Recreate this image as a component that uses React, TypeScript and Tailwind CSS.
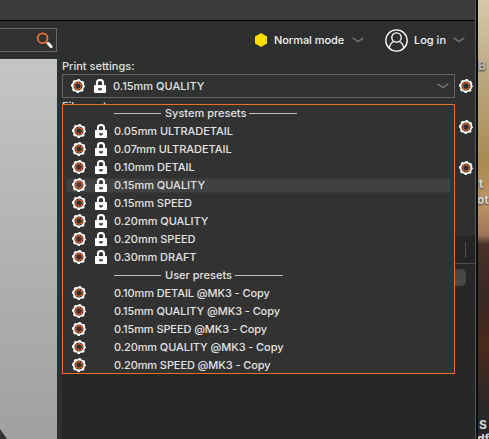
import React from 'react';

const systemPresets = [
  { name: '0.05mm ULTRADETAIL' },
  { name: '0.07mm ULTRADETAIL' },
  { name: '0.10mm DETAIL' },
  { name: '0.15mm QUALITY', selected: true },
  { name: '0.15mm SPEED' },
  { name: '0.20mm QUALITY' },
  { name: '0.20mm SPEED' },
  { name: '0.30mm DRAFT' },
];

const userPresets = [
  '0.10mm DETAIL @MK3 - Copy',
  '0.15mm QUALITY @MK3 - Copy',
  '0.15mm SPEED @MK3 - Copy',
  '0.20mm QUALITY @MK3 - Copy',
  '0.20mm SPEED @MK3 - Copy',
];

function Gear() {
  return (
    <svg className="h-[14px] w-[14px] shrink-0" viewBox="0 0 14 14" fill="none">
      <circle cx="7" cy="7" r="5.4" stroke="#fff" strokeWidth="1.7" />
      <circle cx="7" cy="7" r="6.2" stroke="#fff" strokeWidth="1.6" strokeDasharray="2.5 2.37" strokeDashoffset="1.25" />
      <circle cx="7" cy="7" r="3.2" stroke="#d0602a" strokeWidth="1" />
      <circle cx="7" cy="7" r="3.8" stroke="#f56c1e" strokeWidth="1.1" strokeDasharray="1.5 1.485" strokeDashoffset=".75" />
    </svg>
  );
}

function Lock() {
  return (
    <svg className="h-[14px] w-[12px] shrink-0" viewBox="0 0 12 14" fill="none">
      <path d="M2.9 7V4a3.1 3.1 0 0 1 6.2 0V7" stroke="#fff" strokeWidth="2" />
      <rect y="6" width="12" height="8" rx=".8" fill="#fff" />
      <path d="M4 9.3H8V10.7H6.6V11.8H5.4V10.7H4Z" fill="#333" />
    </svg>
  );
}

function Chevron() {
  return (
    <svg className="h-[6px] w-[12px] shrink-0" viewBox="0 0 12 6" fill="none">
      <path d="M.7 .8 6 4.5 11.3 .8" stroke="#737575" strokeWidth="1.5" />
    </svg>
  );
}

function Separator({ children, wordWidth }: { children: string; wordWidth: string }) {
  return (
    <div className="flex h-[18px] items-center pl-[52px]">
      <span className="mt-px h-px w-[47px] bg-[#bdbdbd]" />
      <span className={`ml-[4px] ${wordWidth} whitespace-nowrap`}>{children}</span>
      <span className="mt-px h-px w-[48px] bg-[#bdbdbd]" />
    </div>
  );
}

function PresetRow({ name, locked, selected }: { name: string; locked?: boolean; selected?: boolean }) {
  return (
    <div className="flex h-[18px] items-center px-[4px]">
      <div
        className={`flex h-[15px] w-full items-center pl-[6px] ${selected ? 'bg-[#414141] ring-1 ring-[#393939] ring-inset' : ''}`}
      >
        <Gear />
        <span className="ml-[9px] flex w-[19px]">{locked && <Lock />}</span>
        <span className={`whitespace-nowrap ${locked ? 'tracking-[-0.03px]' : 'tracking-[-0.09px]'}`}>{name}</span>
      </div>
    </div>
  );
}

function PresetMenu() {
  return (
    <div className="absolute top-[104px] left-[62px] h-[270px] w-[393px] bg-[#323232] text-[#e2e2e2] ring-1 ring-[#ee6c23] ring-inset">
      <Separator wordWidth="w-[84px]">System presets</Separator>
      {systemPresets.map((p) => (
        <PresetRow key={p.name} name={p.name} selected={p.selected} locked />
      ))}
      <Separator wordWidth="w-[70px]">User presets</Separator>
      {userPresets.map((name) => (
        <PresetRow key={name} name={name} />
      ))}
    </div>
  );
}

function Viewport() {
  return (
    <div className="flex w-[57px] shrink-0 flex-col">
      <div className="mt-[7px] flex h-[24px] items-center justify-end border border-l-0 border-[#686a69] bg-[#303131] pr-[3px]">
        <svg className="h-[17px] w-[17px]" viewBox="0 0 17 17" fill="none">
          <circle cx="6.6" cy="6.2" r="4.9" stroke="#ed7233" strokeWidth="1.8" />
          <path d="m10 9.8 1.7 1.7" stroke="#ed7233" strokeWidth="1.8" />
          <path d="m12.3 11.6 2.7 3" stroke="#fff" strokeWidth="3" strokeLinecap="round" />
        </svg>
      </div>
      <div className="mt-[7px] flex grow items-end bg-linear-to-b from-[#c5c5c5] to-[#a0a0a0]">
        <svg className="h-[10px] w-[7px]" viewBox="0 0 7 10">
          <path d="M0 0 7 10H0Z" fill="#333" />
        </svg>
      </div>
    </div>
  );
}

function Sidebar() {
  return (
    <div className="flex min-w-0 grow flex-col pl-[5px]">
      <div className="flex h-[38px] items-center text-[#f3f3f3]">
        <svg className="ml-[193px] h-[14px] w-[12px]" viewBox="0 0 12 14">
          <path d="M6 0 12 3.5V10.5L6 14 0 10.5V3.5Z" fill="#ffdc00" />
        </svg>
        <span className="ml-[7px] w-[78px] whitespace-nowrap tracking-[-0.05px]">Normal mode</span>
        <Chevron />
        <svg className="ml-[21px] h-[23px] w-[23px]" viewBox="0 0 23 23" fill="none" stroke="#fff" strokeWidth="1.3">
          <circle cx="11.5" cy="11.5" r="10.7" />
          <circle cx="11.5" cy="8.5" r="4.7" />
          <path d="M4.2 19.1C4.8 15.6 6.5 13.5 8.7 12.5M18.8 19.1C18.2 15.6 16.5 13.5 14.3 12.5" />
        </svg>
        <span className="ml-[6px] w-[39px] whitespace-nowrap">Log in</span>
        <Chevron />
      </div>
      <div className="mt-[-1px] flex h-[16px] items-center text-[#e0e0e0]">Print settings:</div>
      <div className="flex h-[24px] items-center">
        <div className="flex h-[24px] w-[393px] items-center border border-[#646666] bg-[#303131] pr-[5px] pl-[8px] text-[#e2e2e2]">
          <Gear />
          <span className="mr-[7px] ml-[9px] flex"><Lock /></span>
          <span className="grow">0.15mm QUALITY</span>
          <Chevron />
        </div>
        <span className="ml-[4px]"><Gear /></span>
      </div>
      <div className="mt-[1px] flex h-[16px] items-start text-[#e0e0e0]">Filament:</div>
      <div className="flex h-[24px] items-center justify-end pr-[2px]"><Gear /></div>
      <div className="mt-[17px] flex h-[24px] items-center justify-end pr-[2px]"><Gear /></div>
      <div className="mt-[56px] flex h-[28px] items-center justify-end border-b border-[#4b4d4d] bg-[#242525] pr-[9px]">
        <span className="h-[16px] w-px bg-[#505151]" />
      </div>
      <div className="flex grow justify-end bg-[#262827] pt-[5px] pr-[9px]">
        <div className="h-[17px] w-[50px] rounded-[5px] bg-[#484848]" />
      </div>
    </div>
  );
}

function Desktop() {
  return (
    <div className="flex w-[11px] flex-col overflow-hidden bg-[linear-gradient(180deg,#d7c9a9_0px,#bdab83_70px,#a98b52_160px,#bd9465_205px,#9c7558_235px,#49312a_244px,#382724_300px,#4b2a18_345px,#3a2923_375px,#292729_410px,#242629_439px)] text-[12px] leading-[15px] font-bold text-[#d6d6d6] [text-shadow:0_1px_2px_#333]">
      <span className="mt-[58px] text-[#b5b3ae]">B</span>
      <span className="mt-[103px] ml-px">t</span>
      <span className="mt-[1px] ml-[-1px] whitespace-nowrap">ot</span>
      <span className="mt-[210px] ml-px">S</span>
      <span className="mt-[-1px] ml-[-1px] whitespace-nowrap">df</span>
    </div>
  );
}

export default function App() {
  return (
    <div className="relative flex h-[439px] w-[489px] overflow-hidden bg-[#2d302f] font-['Inter','Liberation_Sans',sans-serif] text-[11px] leading-[14px] font-medium">
      <div className="flex w-[478px] shrink-0 border-r-2 border-[#0b0b0b]">
        <div className="flex w-[476px] flex-col border-r border-[#585a59]">
          <div className="h-[21px] shrink-0 border-b border-black bg-[#3b3b3b]" />
          <div className="flex min-h-0 grow">
            <Viewport />
            <Sidebar />
          </div>
        </div>
      </div>
      <Desktop />
      <PresetMenu />
    </div>
  );
}
